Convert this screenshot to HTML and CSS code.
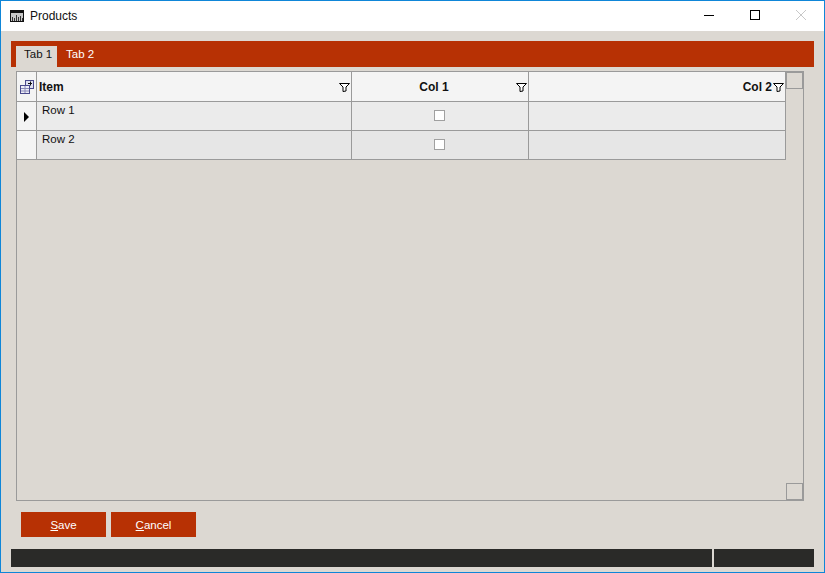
FILE: index.html
```html
<!DOCTYPE html>
<html lang="en">
<head>
<meta charset="utf-8">
<title>Products</title>
<link rel="stylesheet" href="styles.css">
</head>
<body>
<div class="window">
  <header class="titlebar">
    <svg class="app-icon" width="14" height="12" viewBox="0 0 14 12">
      <rect x="0" y="0" width="14" height="12" fill="#111"/>
      <rect x="1" y="3" width="12" height="8" fill="#c8c8c8"/>
      <path d="M2 11V7h1v4zM4 11V8h1v3zM6 11V5h1v6zM8 11V7h1v4zM10 11V6h1v5zM12 11V8h1v3z" fill="#333"/>
    </svg>
    <span class="title">Products</span>
    <div class="win-controls">
      <svg class="win-btn" width="46" height="30" viewBox="0 0 46 30"><path d="M18 14.5h10" stroke="#000" fill="none"/></svg>
      <svg class="win-btn" width="46" height="30" viewBox="0 0 46 30"><rect x="18.5" y="9.5" width="9" height="9" stroke="#000" fill="none"/></svg>
      <svg class="win-btn" width="46" height="30" viewBox="0 0 46 30"><path d="M18 9l10 10M28 9L18 19" stroke="#c8c8c8" fill="none"/></svg>
    </div>
  </header>
  <main class="content">
    <nav class="tabs">
      <span class="tab active">Tab 1</span>
      <span class="tab">Tab 2</span>
    </nav>
    <section class="grid-frame">
      <div class="grid-table">
        <div class="cell head corner">
          <svg width="14" height="14" viewBox="0 0 14 14">
            <rect x="5.5" y="0.5" width="8" height="8" fill="#dfe0f0" stroke="#4a4a8c"/>
            <rect x="0.5" y="5.5" width="9" height="8" fill="#eeeef8" stroke="#4a4a8c"/>
            <path d="M1 8.5h8M1 11h8M5 6v7" stroke="#8a8ab8" fill="none"/>
            <path d="M8 3.5h4M10.5 1.5v4" stroke="#111" fill="none"/>
          </svg>
        </div>
        <div class="cell head left"><b>Item</b><svg class="filter" width="11" height="9" viewBox="0 0 11 9"><path d="M0.5 0.5h10L7 4v4l-3 .5V4z" fill="#fff" stroke="#000"/></svg></div>
        <div class="cell head center"><b>Col 1</b><svg class="filter" width="11" height="9" viewBox="0 0 11 9"><path d="M0.5 0.5h10L7 4v4l-3 .5V4z" fill="#fff" stroke="#000"/></svg></div>
        <div class="cell head right"><b>Col 2</b><svg class="filter-inline" width="11" height="9" viewBox="0 0 11 9"><path d="M0.5 0.5h10L7 4v4l-3 .5V4z" fill="#fff" stroke="#000"/></svg></div>

        <div class="cell rowhead"><span class="arrow"></span></div>
        <div class="cell text odd">Row 1</div>
        <div class="cell check odd"><span class="box"></span></div>
        <div class="cell odd"></div>

        <div class="cell rowhead"></div>
        <div class="cell text even">Row 2</div>
        <div class="cell check even"><span class="box"></span></div>
        <div class="cell even"></div>
      </div>
      <div class="scroll">
        <span class="scroll-btn"></span>
        <span class="scroll-btn"></span>
      </div>
    </section>
    <div class="actions">
      <button class="btn" type="button"><u>S</u>ave</button>
      <button class="btn" type="button"><u>C</u>ancel</button>
    </div>
    <footer class="status">
      <div class="status-main"></div>
      <div class="status-side"></div>
    </footer>
  </main>
</div>
</body>
</html>
```
FILE: styles.css
```css
* { box-sizing: border-box; }
html, body { margin: 0; height: 100%; }
body { font-family: "Liberation Sans", Arial, sans-serif; font-size: 11.5px; color: #111; overflow: hidden; }
.window { width: 825px; height: 573px; border: 1px solid #0f86d8; background: #dcd8d2; display: flex; flex-direction: column; }
.titlebar { height: 30px; flex: none; background: #fff; display: flex; align-items: center; padding-left: 9px; }
.app-icon { flex: none; margin-top: -1px; }
.title { margin-left: 6px; font-size: 12px; margin-top: -1px; }
.win-controls { margin-left: auto; display: flex; align-self: flex-start; }
.win-btn { display: block; }
.content { flex: 1; display: flex; flex-direction: column; padding: 10px 10px 5px 10px; }
.tabs { height: 26px; flex: none; background: #b73104; display: flex; align-items: flex-end; padding-left: 5px; }
.tab { height: 21px; line-height: 17px; width: 41px; padding-left: 8px; color: #fff; }
.tab.active { background: #dcd8d2; color: #111; }
.tab + .tab { width: 47px; padding-left: 9px; }
.grid-frame { margin: 4px 10px 0 5px; height: 430px; flex: none; border: 1px solid #9a9a9a; display: flex; }
.grid-table { flex: none; width: 769px; display: grid; grid-template-columns: 20px 315px 177px 257px; grid-template-rows: 30px 29px 29px; align-self: flex-start; }
.cell { border-right: 1px solid #9a9a9a; border-bottom: 1px solid #9a9a9a; position: relative; }
.head { background: #f4f4f4; display: flex; align-items: center; }
.head b { font-size: 12px; }
.corner { justify-content: center; }
.left { padding-left: 2px; }
.center { justify-content: center; padding-right: 12px; }
.right { justify-content: flex-end; padding-right: 1px; }
.filter { position: absolute; right: 1px; top: 11px; }
.filter-inline { margin-left: 1px; margin-top: 1px; }
.rowhead { background: #f4f4f4; display: flex; align-items: center; justify-content: center; }
.arrow { width: 0; height: 0; border-left: 5px solid #000; border-top: 5px solid transparent; border-bottom: 5px solid transparent; margin-top: 1px; }
.odd { background: #ebebeb; }
.even { background: #e6e6e6; }
.text { padding: 2px 0 0 5px; }
.check { display: flex; align-items: center; justify-content: center; padding-right: 1px; }
.box { width: 11px; height: 11px; background: #fff; border: 1px solid #a0a0a0; margin-top: -2px; }
.scroll { flex: 1; display: flex; flex-direction: column; justify-content: space-between; }
.scroll-btn { display: block; height: 17px; border: 1px solid #9a9a9a; }
.actions { display: flex; gap: 5px; margin: 11px 0 0 10px; flex: none; }
.btn { width: 85px; height: 25px; border: 0; padding: 0; background: #b73104; color: #fff; font: 11.5px "Liberation Sans", Arial, sans-serif; }
.status { display: flex; height: 18px; margin-top: 12px; flex: none; gap: 2px; }
.status-main { width: 701px; background: #2a2a28; }
.status-side { width: 100px; background: #2a2a28; }
```
